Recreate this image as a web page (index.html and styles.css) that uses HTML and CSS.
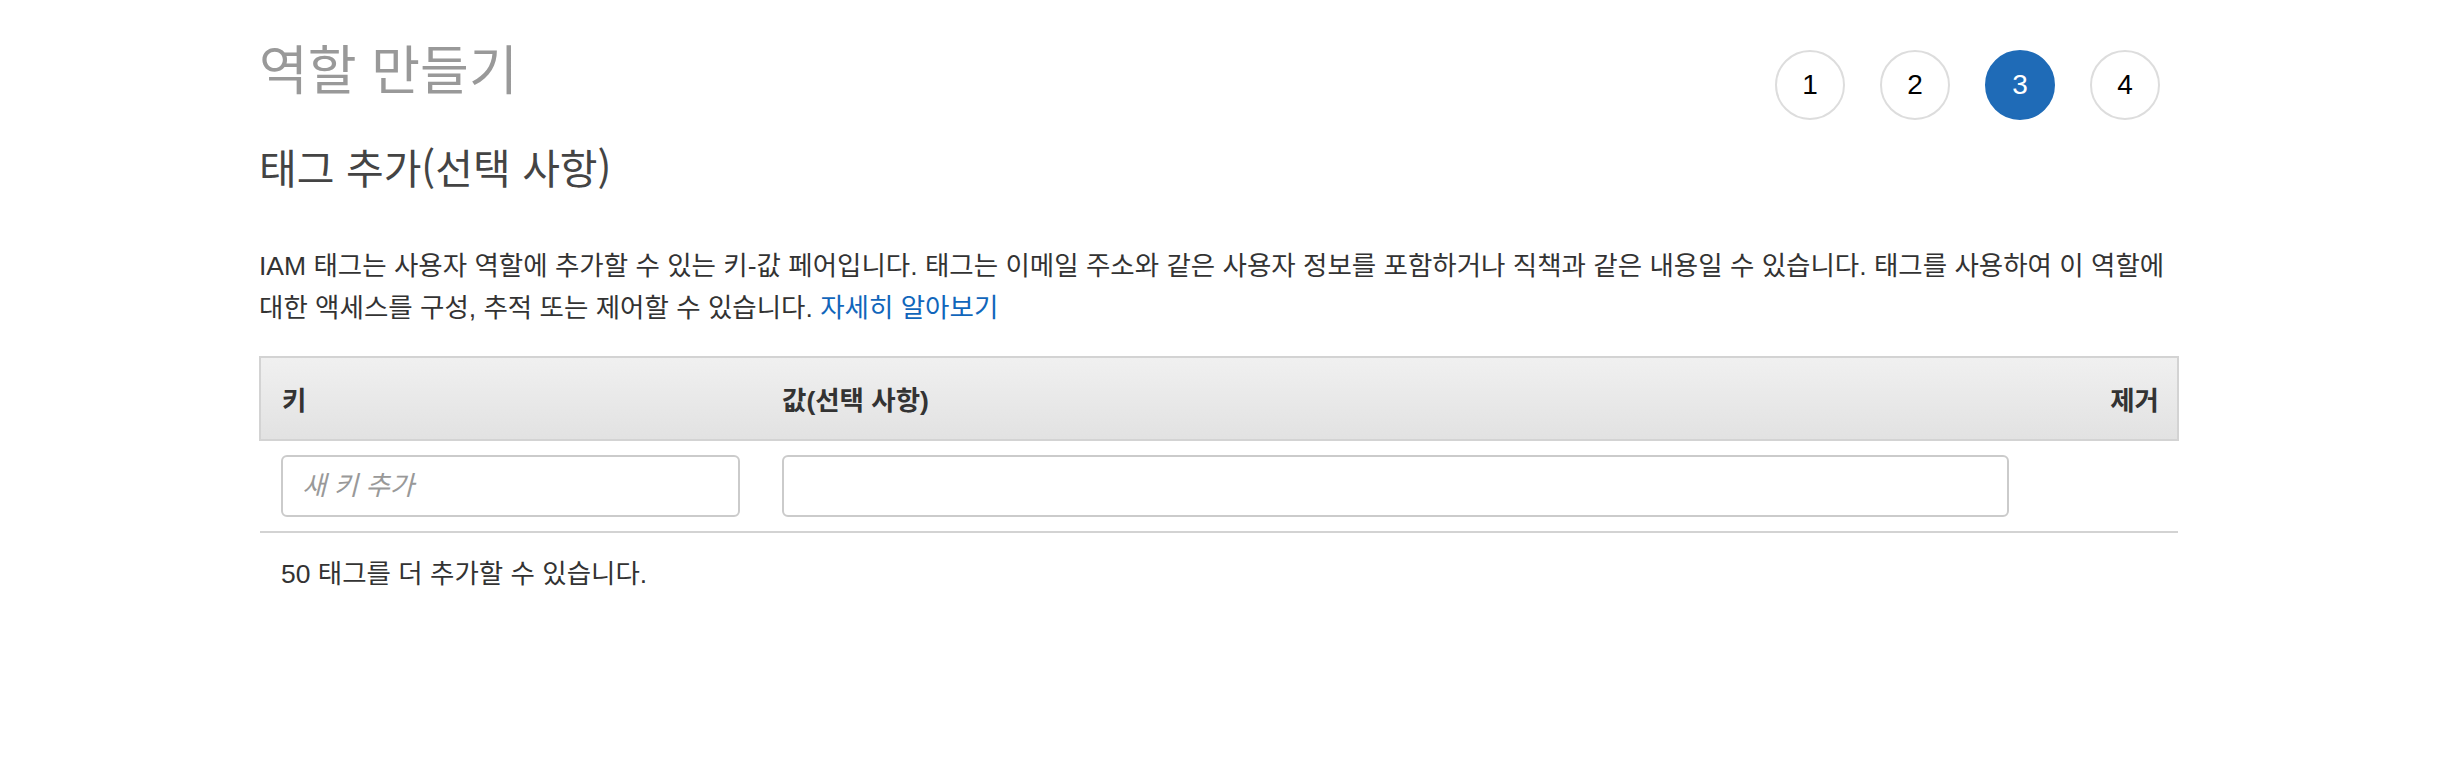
FILE: index.html
```html
<!DOCTYPE html>
<html lang="ko">
<head>
  <meta charset="UTF-8" />
  <meta name="viewport" content="width=device-width, initial-scale=1" />
  <title>역할 만들기</title>
  <link rel="stylesheet" href="styles.css">
</head>
<body>

  <div class="wizard">
    <div class="wizard-head">
      <h1>역할 만들기</h1>
      <ol class="steps">
        <li>1</li>
        <li>2</li>
        <li class="active">3</li>
        <li>4</li>
      </ol>
    </div>

    <h2>태그 추가(선택 사항)</h2>

    <p class="intro">IAM 태그는 사용자 역할에 추가할 수 있는 키-값 페어입니다. 태그는 이메일 주소와 같은 사용자 정보를 포함하거나 직책과 같은 내용일 수 있습니다. 태그를 사용하여 이 역할에 대한 액세스를 구성, 추적 또는 제어할 수 있습니다. <a href="#">자세히 알아보기</a></p>

    <table class="tags">
      <thead>
        <tr>
          <th class="col-key">키</th>
          <th class="col-value">값(선택 사항)</th>
          <th class="col-remove">제거</th>
        </tr>
      </thead>
      <tbody>
        <tr>
          <td><input type="text" class="key-input" placeholder="새 키 추가"></td>
          <td><input type="text" class="value-input"></td>
          <td></td>
        </tr>
      </tbody>
    </table>

    <p class="remaining">50 태그를 더 추가할 수 있습니다.</p>
  </div>

</body>
</html>
```

FILE: styles.css
```css
body {
  margin: 0;
  background: #fff;
  color: #333;
  font-family: "Liberation Sans", "Noto Sans CJK KR", sans-serif;
}

.wizard { width: 1920px; margin: 0 auto; }

.wizard-head {
  display: flex;
  justify-content: space-between;
  align-items: flex-start;
  height: 83px;
  padding-top: 36px;
}

h1 {
  margin: 0;
  font-family: "Noto Sans CJK KR", sans-serif;
  font-size: 53px;
  line-height: 62px;
  font-weight: 400;
  color: #999;
}

.steps {
  list-style: none;
  display: flex;
  gap: 35px;
  margin: 0;
  padding: 14px 19px 0 0;
}
.steps li {
  box-sizing: border-box;
  width: 70px; height: 70px;
  border: 2px solid #ddd;
  border-radius: 50%;
  display: flex; align-items: center; justify-content: center;
  font-family: "Liberation Sans", sans-serif;
  font-size: 28px;
  color: #000;
}
.steps li.active { background: #1f6bb7; border-color: #1f6bb7; color: #fff; }

h2 {
  margin: 22px 0 0;
  font-family: "Noto Sans CJK KR", sans-serif;
  font-size: 41px;
  line-height: 50px;
  font-weight: 400;
  color: #444;
}

.intro {
  margin: 54px 0 0;
  font-size: 26.5px;
  line-height: 42px;
  color: #333;
}
.intro a { color: #1166bb; text-decoration: none; }

.tags {
  width: 100%;
  margin-top: 27px;
  border-collapse: collapse;
}
.tags th {
  height: 81px;
  padding: 0 21px;
  text-align: left;
  font-size: 26.5px;
  font-weight: 700;
  color: #333;
  background: linear-gradient(#f0f0f0, #e2e2e2);
  border-top: 2px solid #d3d3d3;
  border-bottom: 2px solid #d3d3d3;
}
.tags th.col-key { width: 458px; border-left: 2px solid #d3d3d3; }
.tags th.col-value { width: 1227px; }
.tags th.col-remove { text-align: right; padding-right: 18px; border-right: 2px solid #d3d3d3; }

.tags td {
  padding: 14px 21px;
  border-bottom: 2px solid #d3d3d3;
}

.tags input {
  box-sizing: border-box;
  width: 100%;
  height: 62px;
  padding: 0 19px;
  border: 2px solid #cbcbcb;
  border-radius: 6px;
  font-family: "Liberation Sans", "Noto Sans CJK KR", sans-serif;
  font-size: 26.5px;
  color: #333;
}
.tags input::placeholder { color: #999; font-style: italic; }

.remaining {
  margin: 20px 0 0;
  padding-left: 22px;
  font-size: 26.5px;
  line-height: 42px;
  color: #333;
}
```
